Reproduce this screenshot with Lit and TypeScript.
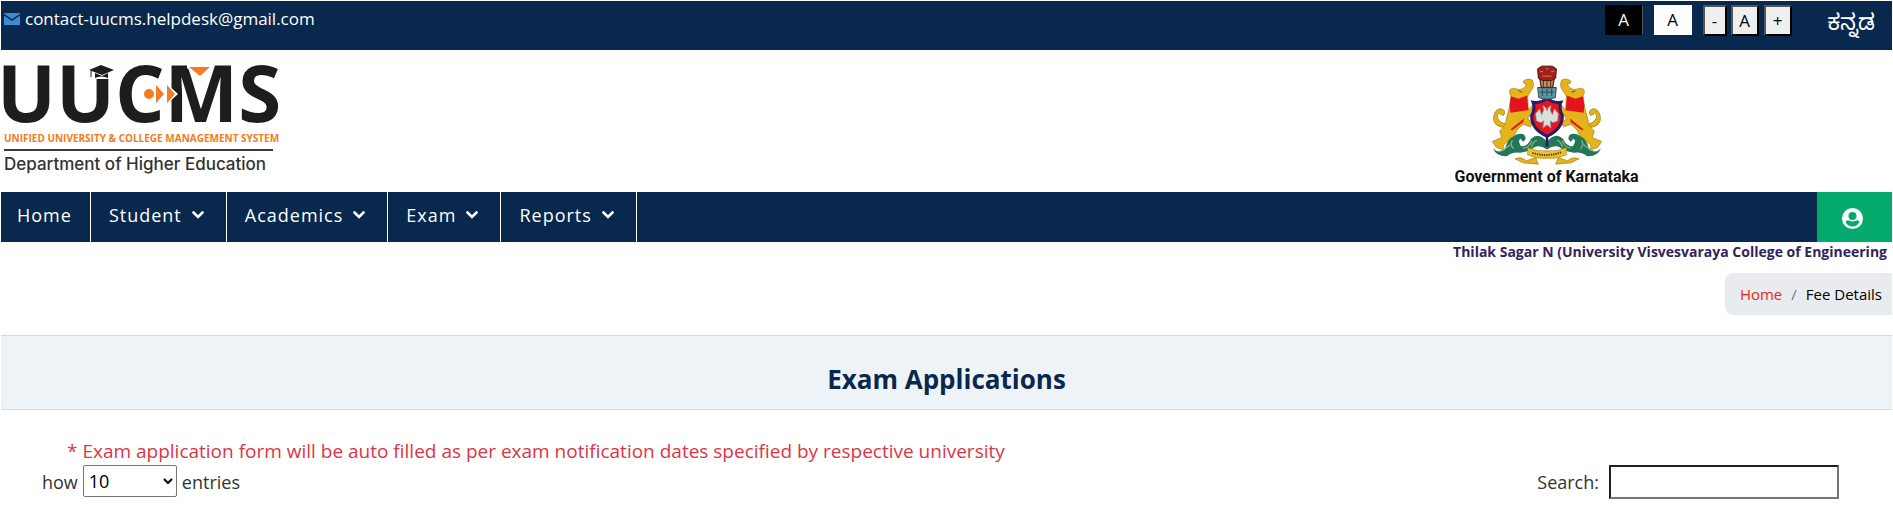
import { LitElement, html, css, svg } from "lit";
import { customElement, property } from "lit/decorators.js";

@customElement("uucms-logo")
class UucmsLogo extends LitElement {
  static styles = css`
    :host { display: block; width: 274px; }
    .mark { display: block; width: 274px; height: 60px; overflow: visible; }
    .letter { font: 700 78px "Open Sans", sans-serif; fill: #1d1d1b; }
    .tagline { margin: 6px 0 0 3px; font: 700 10px/16px "Open Sans", sans-serif; color: #f47b20; white-space: nowrap; }
    .dept { margin: 3px 2px 0 3px; border-top: 2px solid #3c3c3b; font: 500 17px/26px "Inter", sans-serif; color: #333; white-space: nowrap; }
  `;
  render() {
    return html`
      <svg class="mark" viewBox="0 0 274 60" role="img" aria-label="UUCMS">
        <text class="letter" y="58" x="-4">UUCMS</text>
        <path d="M92 0h18v15H92z" fill="#fff" />
        <path d="M88 6l12-5 13 5-12 5z" fill="#1d1d1b" />
        <path d="M94 9v5q6-3 13 0V9l-6 3z" fill="#1d1d1b" />
        <path d="M90 7v6" stroke="#1d1d1b" stroke-width="1" />
        <path d="M186 0h25v4l-12 11-13-11z" fill="#fff" />
        <path d="M188 3h21l-10 9z" fill="#f47b20" />
        <path d="M164 18l13 12-13 12z" fill="#fff" />
        <circle cx="148" cy="30" r="5" fill="#f47b20" />
        <path d="M155 21l8 9-8 9zM166 21l8 9-8 9z" fill="#f47b20" />
      </svg>
      <div class="tagline">UNIFIED UNIVERSITY &amp; COLLEGE MANAGEMENT SYSTEM</div>
      <div class="dept">Department of Higher Education</div>
    `;
  }
}

@customElement("state-emblem")
class StateEmblem extends LitElement {
  static styles = css`
    :host { display: flex; flex-direction: column; align-items: center; }
    .crest { width: 112px; height: 103px; }
    .caption { font: 700 16px/20px "Roboto", sans-serif; color: #111; white-space: nowrap; }
  `;
  private side() {
    return svg`
      <path d="M222 232Q184 230 188 198Q194 174 212 176Q226 182 218 196L208 192Q206 186 200 194Q196 214 224 222z" fill="#e3b21c" stroke="#9c7414" stroke-width="2"/>
      <path d="M240 138Q230 118 244 114L266 118Q284 116 286 100Q278 104 276 94Q288 82 304 90Q312 108 300 122L290 138L292 180L304 166L318 160L316 176L300 190L290 206L304 218L298 230L276 222L258 240L246 264L256 282L240 288L232 272L218 284L216 298L196 292L184 274L212 262L206 242Q222 232 226 206Q236 176 240 138z" fill="#e5b31b" stroke="#a37a17" stroke-width="2"/>
      <path d="M240 138L262 146L288 136L292 180L238 188L236 166z" fill="#e3141c"/>
      <path d="M238 238L280 204L276 216L244 240z" fill="#d5201e"/>
      <path d="M262 122l12 4" stroke="#7a5510" stroke-width="3"/>
      <path d="M186 294Q202 312 222 298Q226 276 238 264L258 252Q284 246 284 266Q276 282 270 266Q258 270 270 288Q290 290 300 266Q324 244 348 276V298Q318 278 300 300L268 308Q244 304 228 318Q196 320 186 294z" fill="#237759"/>
      <path d="M206 304q18-8 32-20M244 270q-8 16 4 26M276 294q20-2 26-22M318 270q-14 6-16 22" stroke="#85aa86" fill="none" stroke-width="4"/>
      <path d="M252 326Q272 318 286 332L314 322L322 342L276 338z" fill="#e5b31b" stroke="#a37a17" stroke-width="2"/>
    `;
  }
  render() {
    return html`
      <svg class="crest" viewBox="180 42 336 308" role="img" aria-label="Karnataka state emblem">
        ${this.side()}
        <g transform="translate(696 0) scale(-1 1)">${this.side()}</g>
        <path d="M290 292Q320 306 348 302Q376 306 406 292V314Q376 328 348 324Q320 328 290 314z" fill="#edc12c" stroke="#a37a17" stroke-width="2"/>
        <path d="M304 308q44 14 88-2" stroke="#5b4316" stroke-width="6" stroke-dasharray="4 3" fill="none"/>
        <path d="M306 156Q330 160 348 144Q366 160 390 156Q382 174 394 196Q396 236 348 258Q300 236 302 196Q314 174 306 156z" fill="#e8141e" stroke="#2b1b69" stroke-width="9"/>
        <path d="M348 256v34" stroke="#2b1b69" stroke-width="8"/>
        <path d="M336 166l8 6 4 10 4-10 8-6-2 14 6 14 6-18 12 14-2 22-14 6-8-6 2 22-12-10-12 10 2-22-8 6-14-6-2-22 12-14 6 18 6-14z" fill="#d9e0dc" stroke="#8b8b8b" stroke-width="2"/>
        <path d="M320 112h56l-3 30q-25 10-50 0z" fill="#5c96a3" stroke="#27505d" stroke-width="3"/>
        <path d="M326 126h44M334 116v22M348 116v22M362 116v22" stroke="#27505d" stroke-width="3"/>
        <path d="M326 82h44l-5 30h-34z" fill="#b59a69" stroke="#5f2416" stroke-width="4"/>
        <path d="M337 88v22M348 88v22M359 88v22" stroke="#5f2416" stroke-width="3"/>
        <path d="M320 56l12-8h32l12 8-2 28-12 7h-28l-12-7z" fill="#9e2019" stroke="#4b1710" stroke-width="3"/>
        <path d="M326 64h10m8-8h8m8 8h10M334 78h28" stroke="#df623f" stroke-width="4"/>
      </svg>
      <div class="caption">Government of Karnataka</div>
    `;
  }
}

@customElement("nav-item")
class NavItem extends LitElement {
  @property() label = "";
  @property({ type: Boolean }) menu = false;
  static styles = css`
    :host { display: block; border-right: 1px solid #fff; }
    .link { display: flex; align-items: center; gap: 10px; height: 46px; padding: 0 22px 0 18px; font: 400 18px/24px "Open Sans", sans-serif; letter-spacing: 1px; color: #fff; text-decoration: none; }
    .plain { padding: 0 18px 0 16px; }
    .chevron { width: 12px; height: 8px; }
  `;
  render() {
    return html`<a class="link ${this.menu ? "" : "plain"}" href="#">${this.label}${this.menu
      ? html`<svg class="chevron" viewBox="0 0 12 8" aria-hidden="true"><path d="M1.5 1.5L6 6l4.500-4.500" fill="none" stroke="#fff" stroke-width="2.600" stroke-linecap="round" /></svg>`
      : ""}</a>`;
  }
}

@customElement("app-root")
class AppRoot extends LitElement {
  static styles = css`
    :host { display: block; padding: 1px 1px 0; background: #fff; font-family: "Open Sans", sans-serif; color: #333; }
    * { box-sizing: border-box; }
    .topbar { display: flex; justify-content: space-between; align-items: flex-start; height: 49px; padding: 4px 17px 0 3px; background: #08294d; }
    .mail { display: flex; align-items: center; gap: 5px; font-size: 17px; line-height: 28px; color: #fff; text-decoration: none; }
    .envelope { width: 16px; height: 12px; }
    .tools { display: flex; align-items: flex-start; }
    .tool { height: 31px; padding: 0; border: 2px solid; border-color: #555 #000 #000 #555; background: #efefef; color: #000; font: 400 17px/26px "Open Sans", sans-serif; }
    .wide { width: 38px; height: 30px; margin-right: 11px; border-width: 1px; }
    .dark { border-color: #000 #555 #000 #000; background: #000; color: #fff; }
    .light { background: #fff; border-color: #fff; }
    .minus { width: 24px; margin-right: 4px; }
    .normal { width: 28px; margin-right: 5px; }
    .plus { width: 28px; margin-right: 36px; }
    .lang { font: 400 22px/32px "Open Sans", "Noto Sans Kannada", sans-serif; color: #fff; text-decoration: none; }
    .brand { display: flex; justify-content: space-between; align-items: flex-start; height: 142px; padding: 14px 13.400% 0 0; }
    .nav { display: flex; height: 50px; background: #08294d; }
    .account { display: grid; place-items: center; width: 75px; margin-left: auto; padding: 2px 5px 0 0; border: 0; background: #04aa6d; }
    .avatar { width: 21px; height: 21px; }
    .who { padding: 0 5px; text-align: right; font-size: 14px; line-height: 20px; font-weight: 700; color: #33235c; }
    .crumbs { display: flex; gap: 9px; width: max-content; margin: 11px 0 20px auto; padding: 11px 10px 11px 15px; border-radius: 8px 0 0 8px; background: #e9ecef; font-size: 15px; line-height: 20px; color: #000; }
    .home { color: #f0260e; text-decoration: none; }
    .slash { color: #6c757d; }
    .band { height: 75px; border: solid #d3d8dd; border-width: 1px 0; background: #eef3f8; }
    .title { margin: 0; padding-top: 25px; text-align: center; font-size: 26px; line-height: 36px; font-weight: 700; color: #08294d; }
    .content { padding: 28px 53px 10px 41px; font-size: 18px; }
    .note { margin: 0; padding-left: 25px; font-size: 19px; line-height: 27px; color: #dc3545; }
    .controls { display: flex; justify-content: space-between; align-items: flex-start; line-height: 34px; }
    .length { display: flex; align-items: flex-start; gap: 5px; }
    .count { width: 94px; height: 32px; padding: 0 1px; border: 1px solid #767676; border-radius: 2px; background: #fff; color: #000; font: 400 18px "Open Sans", sans-serif; }
    .filter { display: flex; align-items: flex-start; gap: 10px; }
    .search { width: 230px; height: 34px; border: 2px inset #767676; background: #fff; font: 400 18px "Open Sans", sans-serif; }
  `;
  render() {
    return html`
      <header>
        <div class="topbar">
          <a class="mail" href="mailto:contact-uucms.helpdesk@gmail.com">
            <svg class="envelope" viewBox="0 0 16 12" aria-hidden="true"><path d="M0 0h16v12H0z" fill="#3c8ad0" /><path d="M0 1.500L8 7l8-5.500" stroke="#08294d" stroke-width="1.500" fill="none" /></svg>
            contact-uucms.helpdesk@gmail.com</a>
          <div class="tools">
            <button class="tool wide dark" aria-label="Dark contrast">A</button>
            <button class="tool wide light" aria-label="Light contrast">A</button>
            <button class="tool minus" aria-label="Smaller text">-</button>
            <button class="tool normal" aria-label="Normal text">A</button>
            <button class="tool plus" aria-label="Larger text">+</button>
            <a class="lang" href="#" lang="kn">ಕನ್ನಡ</a>
          </div>
        </div>
        <div class="brand"><uucms-logo></uucms-logo><state-emblem></state-emblem></div>
        <nav class="nav">
          <nav-item label="Home"></nav-item>
          <nav-item label="Student" menu></nav-item>
          <nav-item label="Academics" menu></nav-item>
          <nav-item label="Exam" menu></nav-item>
          <nav-item label="Reports" menu></nav-item>
          <button class="account" aria-label="Account">
            <svg class="avatar" viewBox="0 0 21 21"><circle cx="10.500" cy="10.500" r="10.500" fill="#fff" /><path d="M3.500 14Q4.500 11.500 7 12.500Q10.500 14.500 14 12.500Q16.500 11.500 17.500 14Q15 18.500 10.500 18.500T3.500 14z" fill="#04aa6d" /><circle cx="10.500" cy="8" r="5" fill="#fff" /><circle cx="10.500" cy="8" r="4" fill="#04aa6d" /></svg>
          </button>
        </nav>
      </header>
      <main>
        <div class="who">Thilak Sagar N (University Visvesvaraya College of Engineering</div>
        <nav class="crumbs" aria-label="Breadcrumb"><a class="home" href="#">Home</a><span class="slash">/</span><span>Fee Details</span></nav>
        <div class="band"><h1 class="title">Exam Applications</h1></div>
        <section class="content">
          <p class="note">* Exam application form will be auto filled as per exam notification dates specified by respective university</p>
          <div class="controls">
            <label class="length">how
              <select class="count"><option>10</option><option>25</option><option>50</option><option>100</option></select>
              entries</label>
            <label class="filter">Search: <input class="search" type="search" /></label>
          </div>
        </section>
      </main>
    `;
  }
}
